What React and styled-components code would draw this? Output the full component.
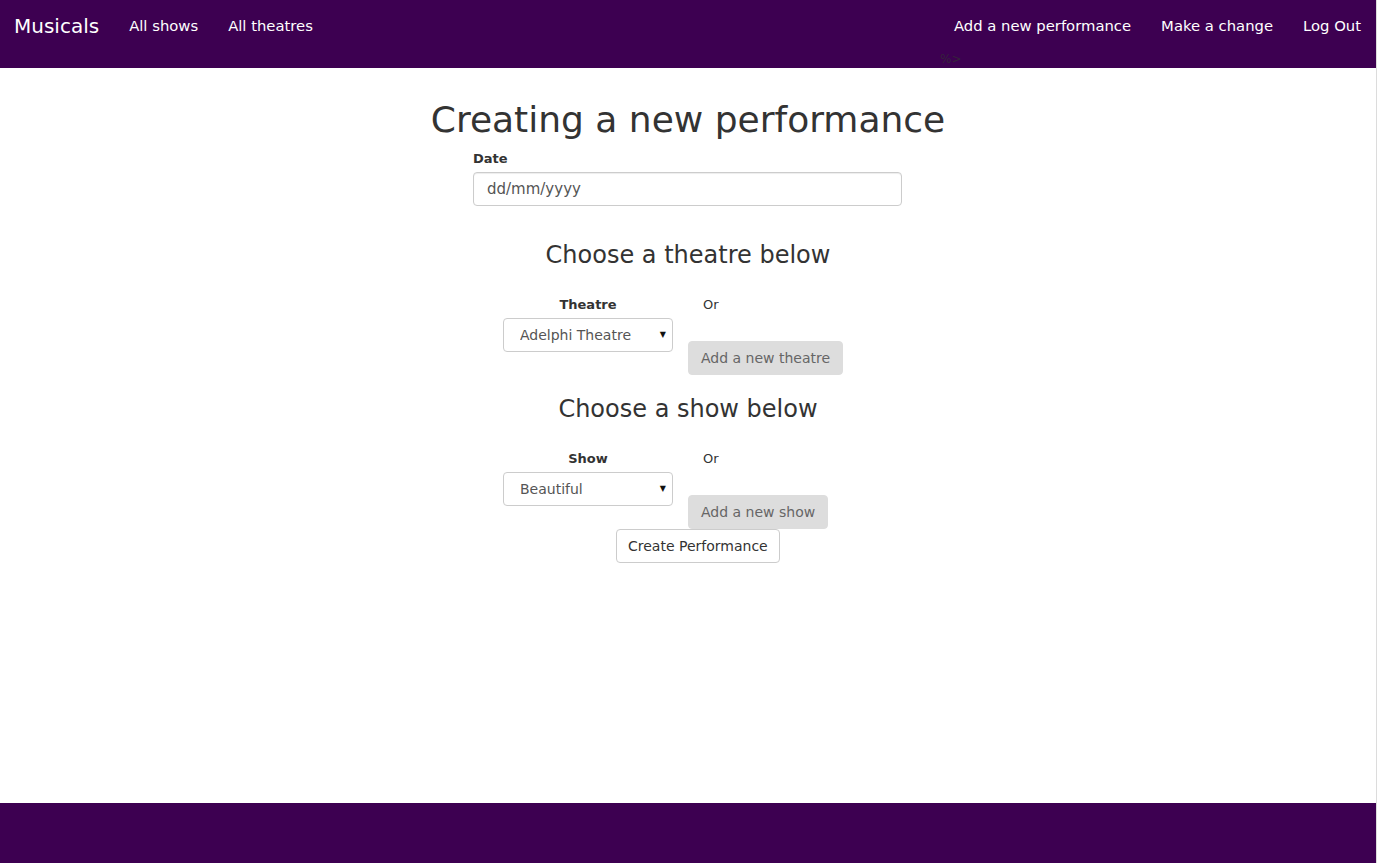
import React from "react"
import styled, { createGlobalStyle } from "styled-components"

const purple = "#3d0051"

const GlobalStyle = createGlobalStyle`
  html {
    background: #dcdcdc;
  }
  body {
    margin: 0;
    font-family: "DejaVu Sans", Verdana, sans-serif;
    color: #333;
  }
  #root {
    width: 1376px;
    background: #fff;
  }
`

const Page = () => {
  return (
    <Wrapper>
      <GlobalStyle />
      <Header>
        <TopRow>
          <NavGroup>
            <Brand>Musicals</Brand>
            <NavLink>All shows</NavLink>
            <NavLink>All theatres</NavLink>
          </NavGroup>
          <NavGroup>
            <NavLink>Add a new performance</NavLink>
            <NavLink>Make a change</NavLink>
            <NavLink>Log Out</NavLink>
          </NavGroup>
        </TopRow>
        <Stray>%&gt;</Stray>
      </Header>

      <Main>
        <Title>Creating a new performance</Title>
        <Form>
          <DateGroup>
            <FieldLabel htmlFor="date">Date</FieldLabel>
            <DateInput id="date" placeholder="dd/mm/yyyy" />
          </DateGroup>

          <SectionTitle>Choose a theatre below</SectionTitle>
          <ChoiceRow>
            <PickColumn>
              <FieldLabel>Theatre</FieldLabel>
              <SelectWrap>
                <Select defaultValue="adelphi">
                  <option value="adelphi">Adelphi Theatre</option>
                </Select>
              </SelectWrap>
            </PickColumn>
            <OrColumn>
              <OrText>Or</OrText>
              <GreyButton>Add a new theatre</GreyButton>
            </OrColumn>
          </ChoiceRow>

          <SectionTitle $top={21} $bottom={27}>Choose a show below</SectionTitle>
          <ChoiceRow>
            <PickColumn>
              <FieldLabel>Show</FieldLabel>
              <SelectWrap>
                <Select defaultValue="beautiful">
                  <option value="beautiful">Beautiful</option>
                </Select>
              </SelectWrap>
            </PickColumn>
            <OrColumn>
              <OrText>Or</OrText>
              <GreyButton>Add a new show</GreyButton>
            </OrColumn>
          </ChoiceRow>

          <SubmitButton type="button">Create Performance</SubmitButton>
        </Form>
      </Main>

      <Footer />
    </Wrapper>
  )
}

const Wrapper = styled.div`
  min-height: 100vh;
  display: flex;
  flex-direction: column;
`

const Header = styled.header`
  background: ${purple};
  height: 68px;
  display: flex;
  flex-direction: column;
`

const TopRow = styled.nav`
  height: 51px;
  display: flex;
  justify-content: space-between;
  align-items: center;
  padding-top: 1px;
  box-sizing: border-box;
`

const NavGroup = styled.div`
  display: flex;
  align-items: center;
`

const NavLink = styled.a`
  color: #fff;
  font-size: 14.8px;
  line-height: 20px;
  padding: 0 15px;
  cursor: pointer;
`

const Brand = styled(NavLink)`
  font-size: 20px;
  padding-left: 14px;
`

const Stray = styled.div`
  margin-left: 940px;
  font-size: 12px;
  line-height: 17px;
  color: #333;
  opacity: 0.7;
`

const Main = styled.main`
  flex: 1;
  display: flex;
  flex-direction: column;
  align-items: center;
  padding-top: 32px;
`

const Title = styled.h1`
  margin: 0;
  font-size: 36px;
  font-weight: 400;
  line-height: 1.1;
  color: #333;
`

const Form = styled.form`
  width: 430px;
  margin-top: 10px;
  display: flex;
  flex-direction: column;
`

const DateGroup = styled.div`
  margin-bottom: 16px;
`

const FieldLabel = styled.label`
  display: block;
  font-size: 13px;
  font-weight: 700;
  line-height: 1.4;
  margin-bottom: 4px;
`

const DateInput = styled.input`
  box-sizing: border-box;
  width: 429px;
  height: 34px;
  padding: 6px 13px;
  border: 1px solid #ccc;
  border-radius: 4px;
  font-family: inherit;
  font-size: 15px;
  color: #555;
  box-shadow: inset 0 1px 1px rgba(0, 0, 0, 0.075);

  &::placeholder {
    color: #555;
  }
`

const SectionTitle = styled.h2`
  margin: ${(p) => p.$top || 20}px 0 ${(p) => p.$bottom || 28}px;
  text-align: center;
  font-size: 24px;
  font-weight: 400;
  line-height: 1.1;
`

const ChoiceRow = styled.div`
  display: flex;
  gap: 15px;
  padding-left: 30px;
`

const PickColumn = styled.div`
  width: 170px;
  text-align: center;
`

const SelectWrap = styled.div`
  position: relative;

  &::after {
    content: "▼";
    position: absolute;
    right: 7px;
    top: 12px;
    font-size: 8px;
    color: #111;
    pointer-events: none;
  }
`

const Select = styled.select`
  appearance: none;
  box-sizing: border-box;
  width: 170px;
  height: 34px;
  padding: 0 16px;
  border: 1px solid #ccc;
  border-radius: 4px;
  background: #fff;
  font-family: inherit;
  font-size: 14px;
  color: #555;
`

const OrColumn = styled.div`
  display: flex;
  flex-direction: column;
  align-items: flex-start;
`

const OrText = styled.span`
  font-size: 13px;
  line-height: 1.4;
  padding-left: 15px;
`

const GreyButton = styled.button`
  margin-top: 27px;
  height: 34px;
  padding: 0 12px;
  border: 1px solid #ddd;
  border-radius: 4px;
  background: #ddd;
  font-family: inherit;
  font-size: 14px;
  color: #666;
`

const SubmitButton = styled.button`
  align-self: flex-start;
  margin-left: 143px;
  height: 34px;
  padding: 0 11px;
  border: 1px solid #ccc;
  border-radius: 4px;
  background: #fff;
  font-family: inherit;
  font-size: 14px;
  color: #333;
`

const Footer = styled.footer`
  height: 60px;
  background: ${purple};
`

export default Page
